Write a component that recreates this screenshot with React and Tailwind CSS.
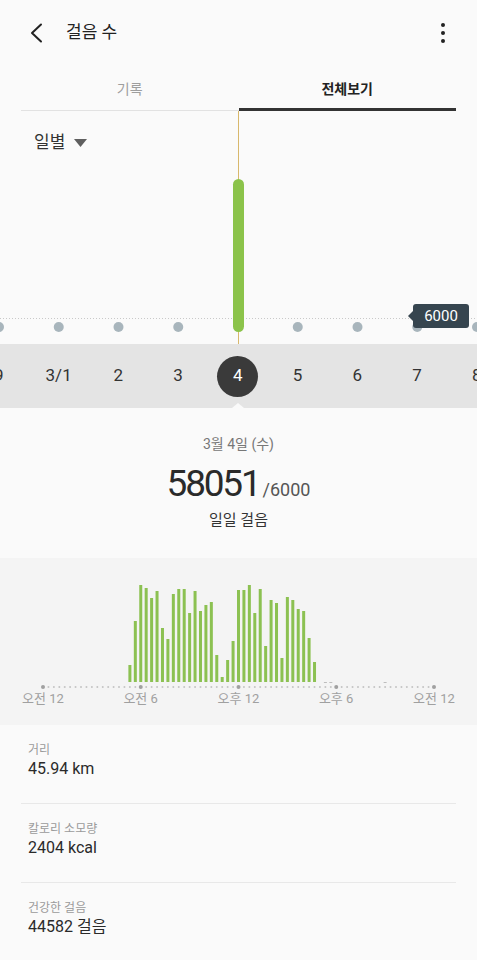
const font = "font-['Roboto','Noto_Sans_CJK_KR',sans-serif]";

// 20분 단위 걸음 막대 (index 16 = 오전 5:20부터)
const bars = [17, 61, 97, 94, 84, 91, 54, 43, 88, 93, 93, 69, 91, 71, 77, 80, 27, 5, 22, 41, 92, 92, 97, 69, 93, 36, 82, 79, 24, 85, 82, 73, 71, 44, 20];
const slot = 391 / 72;
const slotX = (i) => 43 + i * slot;

const days = ['9', '3/1', '2', '3', '4', '5', '6', '7', '8'];
const axisLabels = ['오전 12', '오전 6', '오후 12', '오후 6', '오전 12'];

const stats = [
  { label: '거리', value: '45.94 km' },
  { label: '칼로리 소모량', value: '2404 kcal' },
  { label: '건강한 걸음', value: '44582 걸음' },
];

function TopChart() {
  const dots = [0, 1, 2, 3, 5, 6, 7, 8].map(i => -1 + i * 59.75);
  return (
    <div className="relative h-[233px]">
      <svg className="absolute inset-0" width="477" height="233">
        <line x1="0" y1="207.5" x2="477" y2="207.5" stroke="#c9c9c9" strokeWidth="1" strokeDasharray="1 2" />
        {dots.map(x => (
          <circle key={x} cx={x} cy="216" r="5" fill="#a8b5bc" />
        ))}
        <line x1="238.5" y1="0" x2="238.5" y2="233" stroke="#d8b86c" strokeWidth="1" />
        <rect x="233" y="68" width="11" height="153" rx="5.5" fill="#8bc34a" />
      </svg>
      <div className="relative flex items-center gap-[9px] pl-[34px] pt-[19px]">
        <span className="text-[17px] text-[#333]">일별</span>
        <svg width="13" height="8" viewBox="0 0 13 8"><path d="M0 0h13L6.5 8z" fill="#5f5f5f" /></svg>
      </div>
      <div className="absolute left-[413px] top-[193px] flex h-[24px] w-[56px] items-center justify-center rounded-[3px] bg-[#36454f] text-[15px] text-white">
        <div className="absolute -left-[5px] top-[7px] h-0 w-0 border-y-[5px] border-r-[5px] border-y-transparent border-r-[#36454f]" />
        6000
      </div>
    </div>
  );
}

function DayStrip() {
  return (
    <div className="relative h-[64px] overflow-hidden bg-[#e4e4e4]">
      <div className="-ml-[31px] flex h-full items-center">
        {days.map(d => (
          <div key={d} className="flex w-[59.75px] shrink-0 justify-center">
            {d === '4' ? (
              <div className="flex h-[41px] w-[41px] items-center justify-center rounded-full bg-[#3a3a3a] text-[17px] text-white">{d}</div>
            ) : (
              <span className="text-[17px] text-[#333]">{d}</span>
            )}
          </div>
        ))}
      </div>
      <div className="absolute bottom-0 left-[232px] h-0 w-0 border-x-[6px] border-b-[5px] border-x-transparent border-b-[#fafafa]" />
    </div>
  );
}

function HourChart() {
  const axisDots = Array.from({ length: 73 }, (_, i) => i);
  return (
    <div className="bg-[#f4f4f4] pb-[17px]">
      <svg width="477" height="132" className="block">
        {bars.map((h, k) => (
          <rect key={k} x={slotX(k + 16) - 1.5} y={124 - h} width="3" height={h} fill="#8cc152" />
        ))}
        {[52, 53, 63].map(i => (
          <rect key={i} x={slotX(i) - 1.5} y="124" width="3" height="1" fill="#bdbdbd" />
        ))}
        {axisDots.map(i => (
          <circle key={i} cx={slotX(i)} cy="129" r={i % 18 === 0 ? 2 : 1} fill={i % 18 === 0 ? '#a0a0a0' : '#c4c4c4'} />
        ))}
      </svg>
      <div className="-ml-[6px] flex h-[18px] items-center">
        {axisLabels.map((l, i) => (
          <div key={i} className="w-[97.75px] shrink-0 text-center text-[13px] text-[#a0a0a0]">{l}</div>
        ))}
      </div>
    </div>
  );
}

export default function App() {
  return (
    <div className={`${font} min-h-[960px] w-[477px] overflow-hidden bg-[#fafafa]`}>
      <header className="flex h-[66px] items-center justify-between pl-[29px] pr-[32px]">
        <div className="flex items-center gap-[23px]">
          <svg width="14" height="20" viewBox="0 0 14 20" fill="none">
            <path d="M12 1.5 3 10l9 8.5" stroke="#222" strokeWidth="2" strokeLinecap="round" strokeLinejoin="round" />
          </svg>
          <span className="text-[17px] text-[#222]">걸음 수</span>
        </div>
        <div className="flex flex-col gap-[4px]">
          <span className="h-[4px] w-[4px] rounded-full bg-[#222]" />
          <span className="h-[4px] w-[4px] rounded-full bg-[#222]" />
          <span className="h-[4px] w-[4px] rounded-full bg-[#222]" />
        </div>
      </header>

      <div className="flex px-[21px]">
        <div className="flex h-[45px] flex-1 items-center justify-center border-b border-[#e2e2e2] pt-[2px] text-[14px] text-[#9e9e9e]">기록</div>
        <div className="flex h-[45px] flex-1 items-center justify-center border-b-[3px] border-[#333] pt-[4px] text-[14px] font-bold text-[#222]">전체보기</div>
      </div>

      <TopChart />
      <DayStrip />

      <section className="flex h-[150px] flex-col items-center pt-[27px]">
        <div className="text-[14px] leading-[18px] text-[#777]">3월 4일 (수)</div>
        <div className="mt-[9px] flex h-[44px] items-baseline">
          <span className="text-[37px] leading-[44px] tracking-[-2.2px] text-[#2a2a2a]">58051</span>
          <span className="ml-[3px] text-[18px] leading-[44px] text-[#555]">/6000</span>
        </div>
        <div className="mt-[4px] text-[15px] leading-[20px] text-[#333]">일일 걸음</div>
      </section>

      <HourChart />

      <div className="px-[21px]">
        {stats.map((s, i) => (
          <div key={s.label} className={`px-[7px] pb-[24px] pt-[17px] ${i < 2 ? 'border-b border-[#e8e8e8]' : ''}`}>
            <div className="text-[12px] leading-[16px] text-[#9a9a9a]">{s.label}</div>
            <div className="mt-[1px] text-[16px] leading-[20px] text-[#2a2a2a]">{s.value}</div>
          </div>
        ))}
      </div>
    </div>
  );
}
